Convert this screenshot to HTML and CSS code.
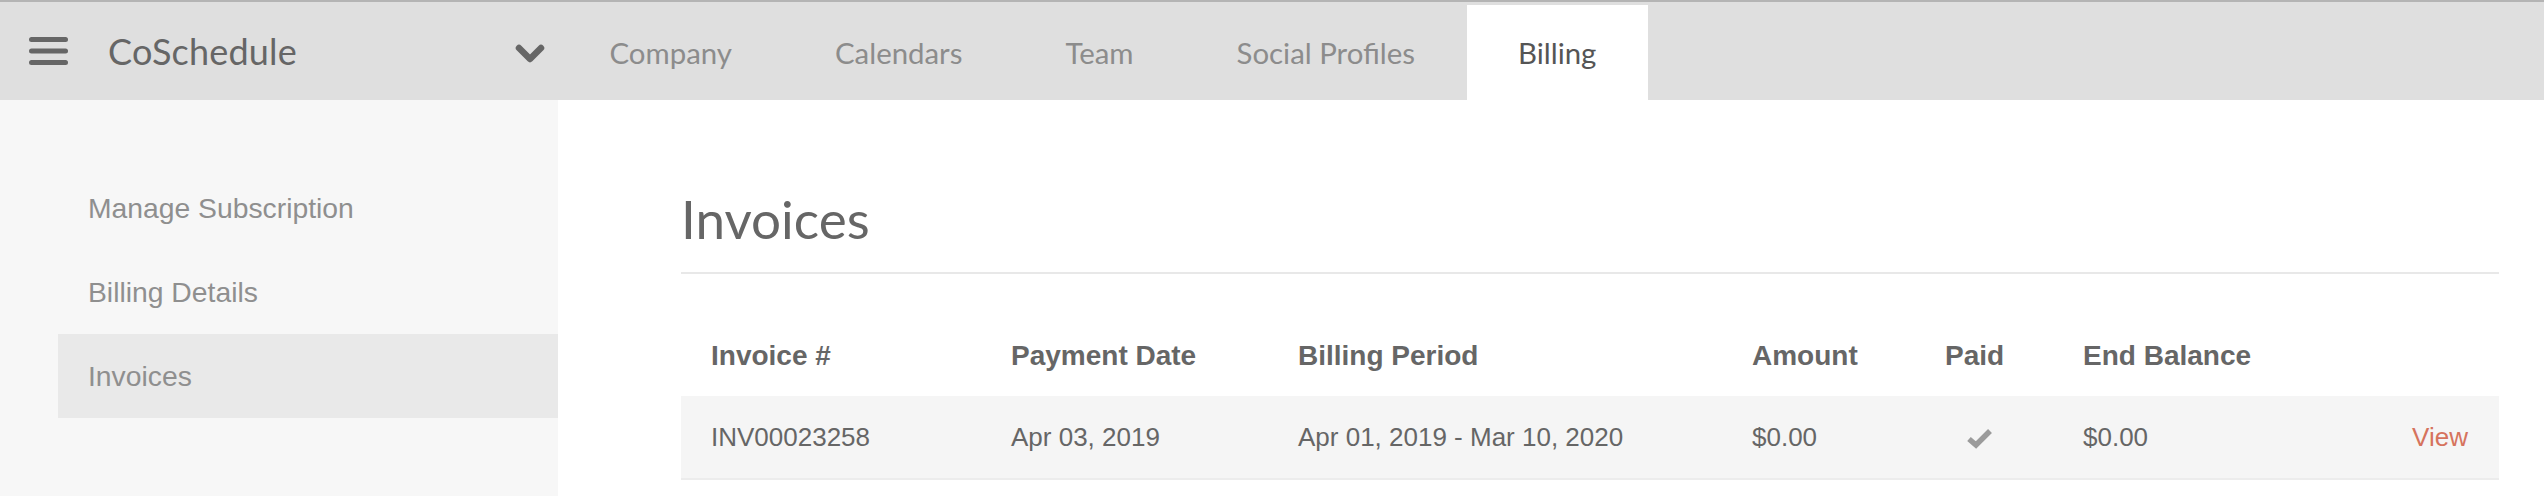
FILE: index.html
```html
<!DOCTYPE html>
<html lang="en">
<head>
<meta charset="utf-8">
<title>CoSchedule - Billing</title>
<link rel="stylesheet" href="styles.css">
</head>
<body>
<header class="topbar">
  <div class="brand">
    <div class="brand-left">
      <svg class="hamburger" width="39" height="28" viewBox="0 0 39 28" aria-hidden="true">
        <rect x="0" y="0" width="39" height="5" rx="2.5" fill="#666"/>
        <rect x="0" y="11.5" width="39" height="5" rx="2.5" fill="#666"/>
        <rect x="0" y="23" width="39" height="5" rx="2.5" fill="#666"/>
      </svg>
      <span class="brand-name">CoSchedule</span>
    </div>
    <svg class="chevron" width="30" height="19" viewBox="0 0 30 19" aria-hidden="true">
      <polyline points="4,4 15,15 26,4" fill="none" stroke="#666" stroke-width="6.5" stroke-linecap="round" stroke-linejoin="round"/>
    </svg>
  </div>
  <nav class="tabs">
    <a class="tab">Company</a>
    <a class="tab">Calendars</a>
    <a class="tab">Team</a>
    <a class="tab">Social Profiles</a>
    <a class="tab active">Billing</a>
  </nav>
</header>
<div class="layout">
  <aside class="sidebar">
    <a class="side-item">Manage Subscription</a>
    <a class="side-item">Billing Details</a>
    <a class="side-item active">Invoices</a>
  </aside>
  <main class="content">
    <h1 class="title">Invoices</h1>
    <table class="invoices">
      <colgroup>
        <col class="c-inv"><col class="c-date"><col class="c-period"><col class="c-amount"><col class="c-paid"><col class="c-balance"><col class="c-view">
      </colgroup>
      <thead>
        <tr>
          <th>Invoice #</th>
          <th>Payment Date</th>
          <th>Billing Period</th>
          <th>Amount</th>
          <th>Paid</th>
          <th>End Balance</th>
          <th></th>
        </tr>
      </thead>
      <tbody>
        <tr>
          <td>INV00023258</td>
          <td>Apr 03, 2019</td>
          <td>Apr 01, 2019 - Mar 10, 2020</td>
          <td>$0.00</td>
          <td><svg class="check" width="27" height="21" viewBox="0 0 27 21" aria-hidden="true"><polyline points="3,11 10,17 24,3" fill="none" stroke="#9b9b9b" stroke-width="5.5" stroke-linejoin="miter"/></svg></td>
          <td>$0.00</td>
          <td class="view"><a>View</a></td>
        </tr>
      </tbody>
    </table>
  </main>
</div>
</body>
</html>
```
FILE: styles.css
```css
* { box-sizing: border-box; }
html, body { margin: 0; padding: 0; background: #ffffff; }
body { font-family: "Liberation Sans", Arial, sans-serif; color: #666; height: 496px; overflow: hidden; }

.topbar {
  display: flex;
  height: 100px;
  background: #dfdfdf;
  border-top: 2px solid #b4b4b4;
}
.brand {
  width: 558px;
  flex: none;
  display: flex;
  align-items: center;
  justify-content: space-between;
  padding: 0 13px 0 29px;
}
.brand-left { display: flex; align-items: center; gap: 40px; }
.hamburger { display: block; }
.brand-name {
  font-family: Lato, "Noto Sans", sans-serif;
  font-size: 36px;
  color: #666;
  letter-spacing: 0.2px;
}
.chevron { display: block; margin-top: 4px; }

.tabs { display: flex; align-items: stretch; }
.tab {
  display: flex;
  align-items: center;
  padding: 0 51.5px;
  font-family: Lato, "Noto Sans", sans-serif;
  font-size: 29.4px;
  color: #8c8c8c;
  margin-top: 3px;
}
.tab.active { background: #ffffff; color: #555; }

.layout { display: flex; height: 396px; }
.sidebar {
  width: 558px;
  flex: none;
  background: #f7f7f7;
  padding-top: 66px;
  display: flex;
  flex-direction: column;
}
.side-item {
  display: flex;
  align-items: center;
  height: 84px;
  margin-left: 58px;
  padding-left: 30px;
  font-size: 28.3px;
  color: #8f8f8f;
}
.side-item.active { background: #e9e9e9; }

.content {
  flex: 1;
  padding: 89px 45px 0 123px;
}
.title {
  margin: 0;
  font-family: Lato, "Noto Sans", sans-serif;
  font-weight: 400;
  font-size: 53px;
  line-height: 60px;
  color: #666;
  padding-bottom: 23px;
  border-bottom: 2px solid #e8e8e8;
}
.invoices {
  width: 100%;
  table-layout: fixed;
  border-collapse: collapse;
  margin-top: 42px;
}
.c-inv { width: 300px; }
.c-date { width: 287px; }
.c-period { width: 454px; }
.c-amount { width: 193px; }
.c-paid { width: 138px; }
.c-balance { width: 250px; }
.invoices th {
  text-align: left;
  font-size: 28px;
  font-weight: 700;
  color: #666;
  height: 80px;
  padding: 0 0 0 30px;
  vertical-align: middle;
}
.invoices td {
  font-size: 26px;
  color: #666;
  height: 83px;
  padding: 0 0 0 30px;
  vertical-align: middle;
}
.invoices tbody tr { background: #f5f5f5; border-bottom: 2px solid #ececec; }
.check { display: block; margin-left: 21px; margin-top: 2px; }
.invoices td.view { text-align: right; padding: 0 31px 0 0; }
.view a { color: #d6735d; }
```
